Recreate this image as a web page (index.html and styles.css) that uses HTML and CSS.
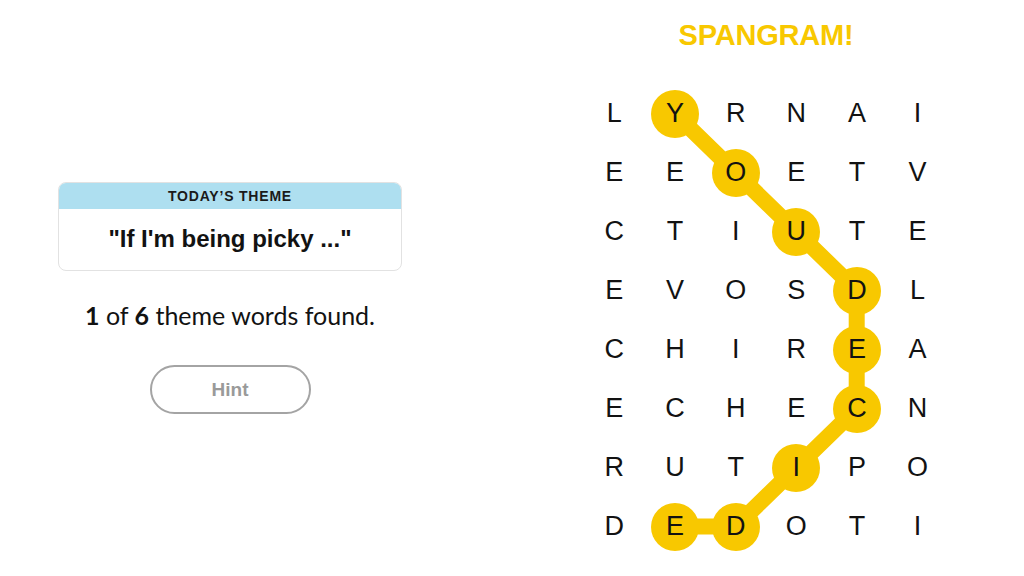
FILE: index.html
```html
<!DOCTYPE html>
<html lang="en">
<head>
<meta charset="utf-8">
<title>Strands</title>
<link rel="stylesheet" href="styles.css">
</head>
<body>
<main class="game">
  <section class="info">
    <div class="theme-card">
      <div class="theme-head">TODAY’S THEME</div>
      <div class="theme-body">"If I'm being picky ..."</div>
    </div>
    <p class="found"><b>1</b> of <b>6</b> theme words found.</p>
    <button class="hint" type="button">Hint</button>
  </section>
  <section class="board">
    <h1 class="title">SPANGRAM!</h1>
    <div class="grid-wrap">
      <svg class="path" width="364" height="472" viewBox="0 0 364 472" aria-hidden="true">
        <polyline points="90.9,29.5 151.5,88.5 212.1,147.5 272.7,206.5 272.7,265.5 272.7,324.5 212.1,383.5 151.5,442.5 90.9,442.5" fill="none" stroke="#f8c800" stroke-width="16" stroke-linejoin="round" stroke-linecap="round"/>
      </svg>
      <div class="grid">
        <span class="cell">L</span><span class="cell on">Y</span><span class="cell">R</span><span class="cell">N</span><span class="cell">A</span><span class="cell">I</span>
        <span class="cell">E</span><span class="cell">E</span><span class="cell on">O</span><span class="cell">E</span><span class="cell">T</span><span class="cell">V</span>
        <span class="cell">C</span><span class="cell">T</span><span class="cell">I</span><span class="cell on">U</span><span class="cell">T</span><span class="cell">E</span>
        <span class="cell">E</span><span class="cell">V</span><span class="cell">O</span><span class="cell">S</span><span class="cell on">D</span><span class="cell">L</span>
        <span class="cell">C</span><span class="cell">H</span><span class="cell">I</span><span class="cell">R</span><span class="cell on">E</span><span class="cell">A</span>
        <span class="cell">E</span><span class="cell">C</span><span class="cell">H</span><span class="cell">E</span><span class="cell on">C</span><span class="cell">N</span>
        <span class="cell">R</span><span class="cell">U</span><span class="cell">T</span><span class="cell on">I</span><span class="cell">P</span><span class="cell">O</span>
        <span class="cell">D</span><span class="cell on">E</span><span class="cell on">D</span><span class="cell">O</span><span class="cell">T</span><span class="cell">I</span>
      </div>
    </div>
  </section>
</main>
</body>
</html>
```

FILE: styles.css
```css
* { box-sizing: border-box; }
html, body {
  margin: 0;
  padding: 0;
  background: #ffffff;
  width: 1024px;
  height: 576px;
  overflow: hidden;
  font-family: "Liberation Sans", Arial, sans-serif;
  color: #121212;
}
.game {
  display: flex;
  column-gap: 124px;
}
.info {
  width: 460px;
  padding-top: 182px;
  display: flex;
  flex-direction: column;
  align-items: center;
}
.theme-card {
  width: 344px;
  border: 1px solid #e2e2e2;
  border-radius: 8px;
  overflow: hidden;
  background: #fff;
}
.theme-head {
  height: 26px;
  background: #aedff0;
  display: flex;
  align-items: center;
  justify-content: center;
  font-size: 14px;
  font-weight: 700;
  letter-spacing: 0.8px;
  color: #1a1a1a;
}
.theme-body {
  height: 61px;
  display: flex;
  align-items: center;
  justify-content: center;
  font-size: 24px;
  font-weight: 700;
  padding-bottom: 2px;
}
.found {
  margin: 30px 0 0;
  font-family: Lato, "Liberation Sans", sans-serif;
  font-size: 25px;
  line-height: 28px;
}
.found b { font-weight: 700; }
.hint {
  margin-top: 36px;
  width: 161px;
  height: 49px;
  border: 2px solid #a4a4a4;
  border-radius: 25px;
  background: #fff;
  color: #9a9a9a;
  font-family: "Liberation Sans", Arial, sans-serif;
  font-size: 19px;
  font-weight: 700;
  padding: 0;
}
.board {
  width: 364px;
  display: flex;
  flex-direction: column;
  align-items: center;
}
.title {
  margin: 18px 0 0;
  height: 34px;
  line-height: 34px;
  font-size: 29px;
  font-weight: 700;
  color: #f8c800;
  letter-spacing: -0.2px;
}
.grid-wrap {
  position: relative;
  margin-top: 32px;
  width: 364px;
  height: 472px;
}
.path {
  position: absolute;
  left: 0;
  top: 0;
}
.grid {
  position: relative;
  display: grid;
  grid-template-columns: repeat(6, 60.66px);
  grid-template-rows: repeat(8, 59px);
}
.cell {
  display: flex;
  align-items: center;
  justify-content: center;
  font-size: 27px;
  line-height: 1;
  color: #121212;
}
.cell.on {
  justify-self: center;
  align-self: center;
  width: 48px;
  height: 48px;
  border-radius: 50%;
  background: #f8c800;
}
```
